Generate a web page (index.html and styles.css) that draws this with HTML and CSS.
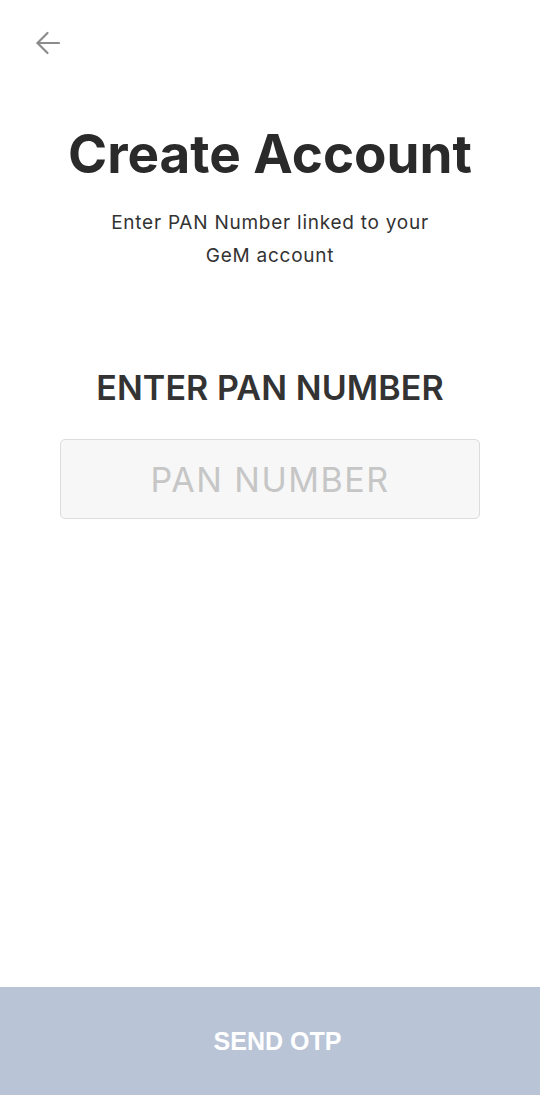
FILE: index.html
```html
<!DOCTYPE html>
<html>
<head>
<meta charset="utf-8">
<link rel="stylesheet" href="styles.css">
</head>
<body>
<div class="screen">
  <header class="topbar">
    <button class="back" aria-label="Back">
      <svg width="28" height="28" viewBox="0 0 28 28" fill="none" stroke="#8c8c8c" stroke-width="2.2" stroke-linecap="round" stroke-linejoin="round">
        <path d="M25 14H3.5"/>
        <path d="M13.5 4L3.5 14L13.5 24"/>
      </svg>
    </button>
  </header>
  <main class="content">
    <h1 class="title">Create Account</h1>
    <p class="subtitle">Enter PAN Number linked to your<br>GeM account</p>
    <h2 class="label">ENTER PAN NUMBER</h2>
    <div class="field">PAN NUMBER</div>
  </main>
  <footer class="cta">SEND OTP</footer>
</div>
</body>
</html>
```

FILE: styles.css
```css
* { box-sizing: border-box; }
html, body { margin: 0; padding: 0; background: #fff; }
.screen {
  width: 540px;
  height: 1095px;
  display: flex;
  flex-direction: column;
  font-family: Inter, "Noto Sans", sans-serif;
}
.topbar {
  height: 88px;
  padding: 29px 0 0 34px;
}
.back {
  border: 0;
  background: none;
  padding: 0;
  width: 28px;
  height: 28px;
  display: block;
}
.content {
  flex: 1;
  display: flex;
  flex-direction: column;
  align-items: center;
}
.title {
  margin: 34px 0 0;
  font-size: 53px;
  font-weight: 700;
  color: #2a2a2a;
  line-height: 64px;
  letter-spacing: 0;
}
.subtitle {
  margin: 20px 0 0;
  font-size: 19px;
  line-height: 33px;
  color: #333;
  text-align: center;
  letter-spacing: 0.75px;
}
.label {
  margin: 96px 0 0;
  font-size: 34px;
  font-weight: 600;
  color: #333;
  line-height: 40px;
  letter-spacing: 0.1px;
}
.field {
  margin-top: 31px;
  width: 420px;
  height: 80px;
  background: #f7f7f7;
  border: 1.5px solid #dcdcdc;
  border-radius: 5px;
  display: flex;
  align-items: center;
  justify-content: center;
  font-size: 34px;
  font-weight: 400;
  color: #c6c6c6;
  letter-spacing: 1.5px;
}
.cta {
  height: 108px;
  background: #b9c4d7;
  color: #fff;
  display: flex;
  align-items: center;
  justify-content: center;
  font-family: "Liberation Sans", Arial, sans-serif;
  font-weight: 700;
  font-size: 25px;
  padding-left: 15px;
}
```
